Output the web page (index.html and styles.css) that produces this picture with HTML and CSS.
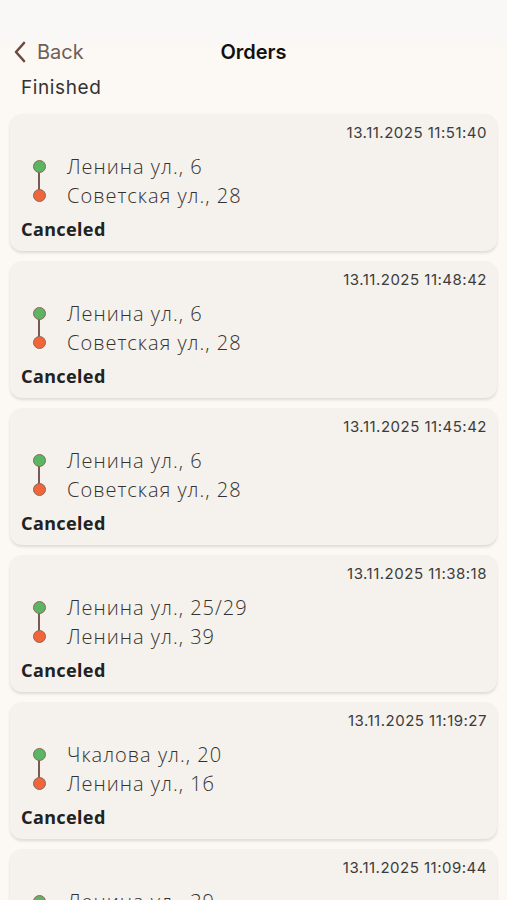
FILE: index.html
```html
<!DOCTYPE html>
<html lang="ru">
<head>
  <meta charset="UTF-8" />
  <meta name="viewport" content="width=device-width, initial-scale=1.0"/>
  <title>Orders</title>
  <link rel="stylesheet" href="styles.css">
</head>
<body>
  <header class="topbar">
    <a class="back" href="#">
      <svg class="chevron" width="14" height="24" viewBox="0 0 14 24"><path d="M11 3 L3 12 L11 21" fill="none" stroke="#6b4a42" stroke-width="2.6" stroke-linecap="round" stroke-linejoin="round"/></svg>
      <span>Back</span>
    </a>
    <h1>Orders</h1>
  </header>

  <main class="content">
    <div class="section">Finished</div>

    <div class="card">
      <div class="date">13.11.2025 11:51:40</div>
      <div class="route">
        <div class="stop from">Ленина ул., 6</div>
        <div class="stop to">Советская ул., 28</div>
      </div>
      <div class="status">Canceled</div>
    </div>

    <div class="card">
      <div class="date">13.11.2025 11:48:42</div>
      <div class="route">
        <div class="stop from">Ленина ул., 6</div>
        <div class="stop to">Советская ул., 28</div>
      </div>
      <div class="status">Canceled</div>
    </div>

    <div class="card">
      <div class="date">13.11.2025 11:45:42</div>
      <div class="route">
        <div class="stop from">Ленина ул., 6</div>
        <div class="stop to">Советская ул., 28</div>
      </div>
      <div class="status">Canceled</div>
    </div>

    <div class="card">
      <div class="date">13.11.2025 11:38:18</div>
      <div class="route">
        <div class="stop from">Ленина ул., 25/29</div>
        <div class="stop to">Ленина ул., 39</div>
      </div>
      <div class="status">Canceled</div>
    </div>

    <div class="card">
      <div class="date">13.11.2025 11:19:27</div>
      <div class="route">
        <div class="stop from">Чкалова ул., 20</div>
        <div class="stop to">Ленина ул., 1б</div>
      </div>
      <div class="status">Canceled</div>
    </div>

    <div class="card">
      <div class="date">13.11.2025 11:09:44</div>
      <div class="route">
        <div class="stop from">Ленина ул., 39</div>
        <div class="stop to">Советская ул., 28</div>
      </div>
      <div class="status">Canceled</div>
    </div>
  </main>
</body>
</html>
```

FILE: styles.css
```css
html, body {
  margin: 0;
  padding: 0;
}
body {
  font-family: Inter, "Noto Sans", sans-serif;
  background-color: #fcf8f3;
  color: #2b2b2b;
  width: 507px;
  height: 900px;
  overflow: hidden;
}
.topbar {
  position: relative;
  height: 48px;
  padding-top: 30px;
  display: flex;
  align-items: flex-start;
  background: linear-gradient(to bottom, #f9f8f7 0, #f9f8f7 40px, #fcf8f3 48px);
}
.back {
  display: flex;
  align-items: center;
  gap: 10px;
  height: 44px;
  padding-left: 13px;
  color: #6e5f5a;
  text-decoration: none;
  font-size: 20px;
}
.topbar h1 {
  position: absolute;
  left: 0;
  right: 0;
  top: 30px;
  margin: 0;
  height: 44px;
  line-height: 44px;
  text-align: center;
  font-size: 20px;
  font-weight: 600;
  color: #111;
}
.content {
  padding: 0 10px;
}
.section {
  font-size: 19px;
  letter-spacing: 0.6px;
  color: #333;
  padding-left: 11px;
  height: 36px;
  line-height: 20px;
}
.card {
  background: #f5f1ec;
  border-radius: 12px;
  box-shadow: 0 2px 3px rgba(0, 0, 0, 0.12);
  padding: 10px 10px 11px 11px;
  margin-bottom: 10px;
  height: 116px;
}
.date {
  text-align: right;
  font-size: 15px;
  line-height: 18px;
  letter-spacing: 0.5px;
  color: #3c3c3c;
}
.route {
  position: relative;
  margin-top: 10px;
  padding-left: 46px;
}
.route::before {
  content: "";
  position: absolute;
  left: 17.25px;
  top: 15px;
  height: 29px;
  width: 1.5px;
  background: #7a5a52;
}
.stop {
  position: relative;
  font-family: "Open Sans", "Noto Sans", sans-serif;
  font-weight: 300;
  font-size: 20px;
  letter-spacing: 1px;
  line-height: 29px;
  color: #36312f;
}
.stop::before {
  content: "";
  position: absolute;
  left: -34.5px;
  top: 8px;
  width: 11px;
  height: 11px;
  border-radius: 50%;
  border: 1px solid #8a6a55;
}
.from::before {
  background: #5cb562;
}
.to::before {
  background: #f2643a;
}
.status {
  margin-top: 9px;
  font-family: "Noto Sans", sans-serif;
  font-size: 18px;
  font-weight: 700;
  letter-spacing: 0.4px;
  line-height: 20px;
  color: #222;
}
```
